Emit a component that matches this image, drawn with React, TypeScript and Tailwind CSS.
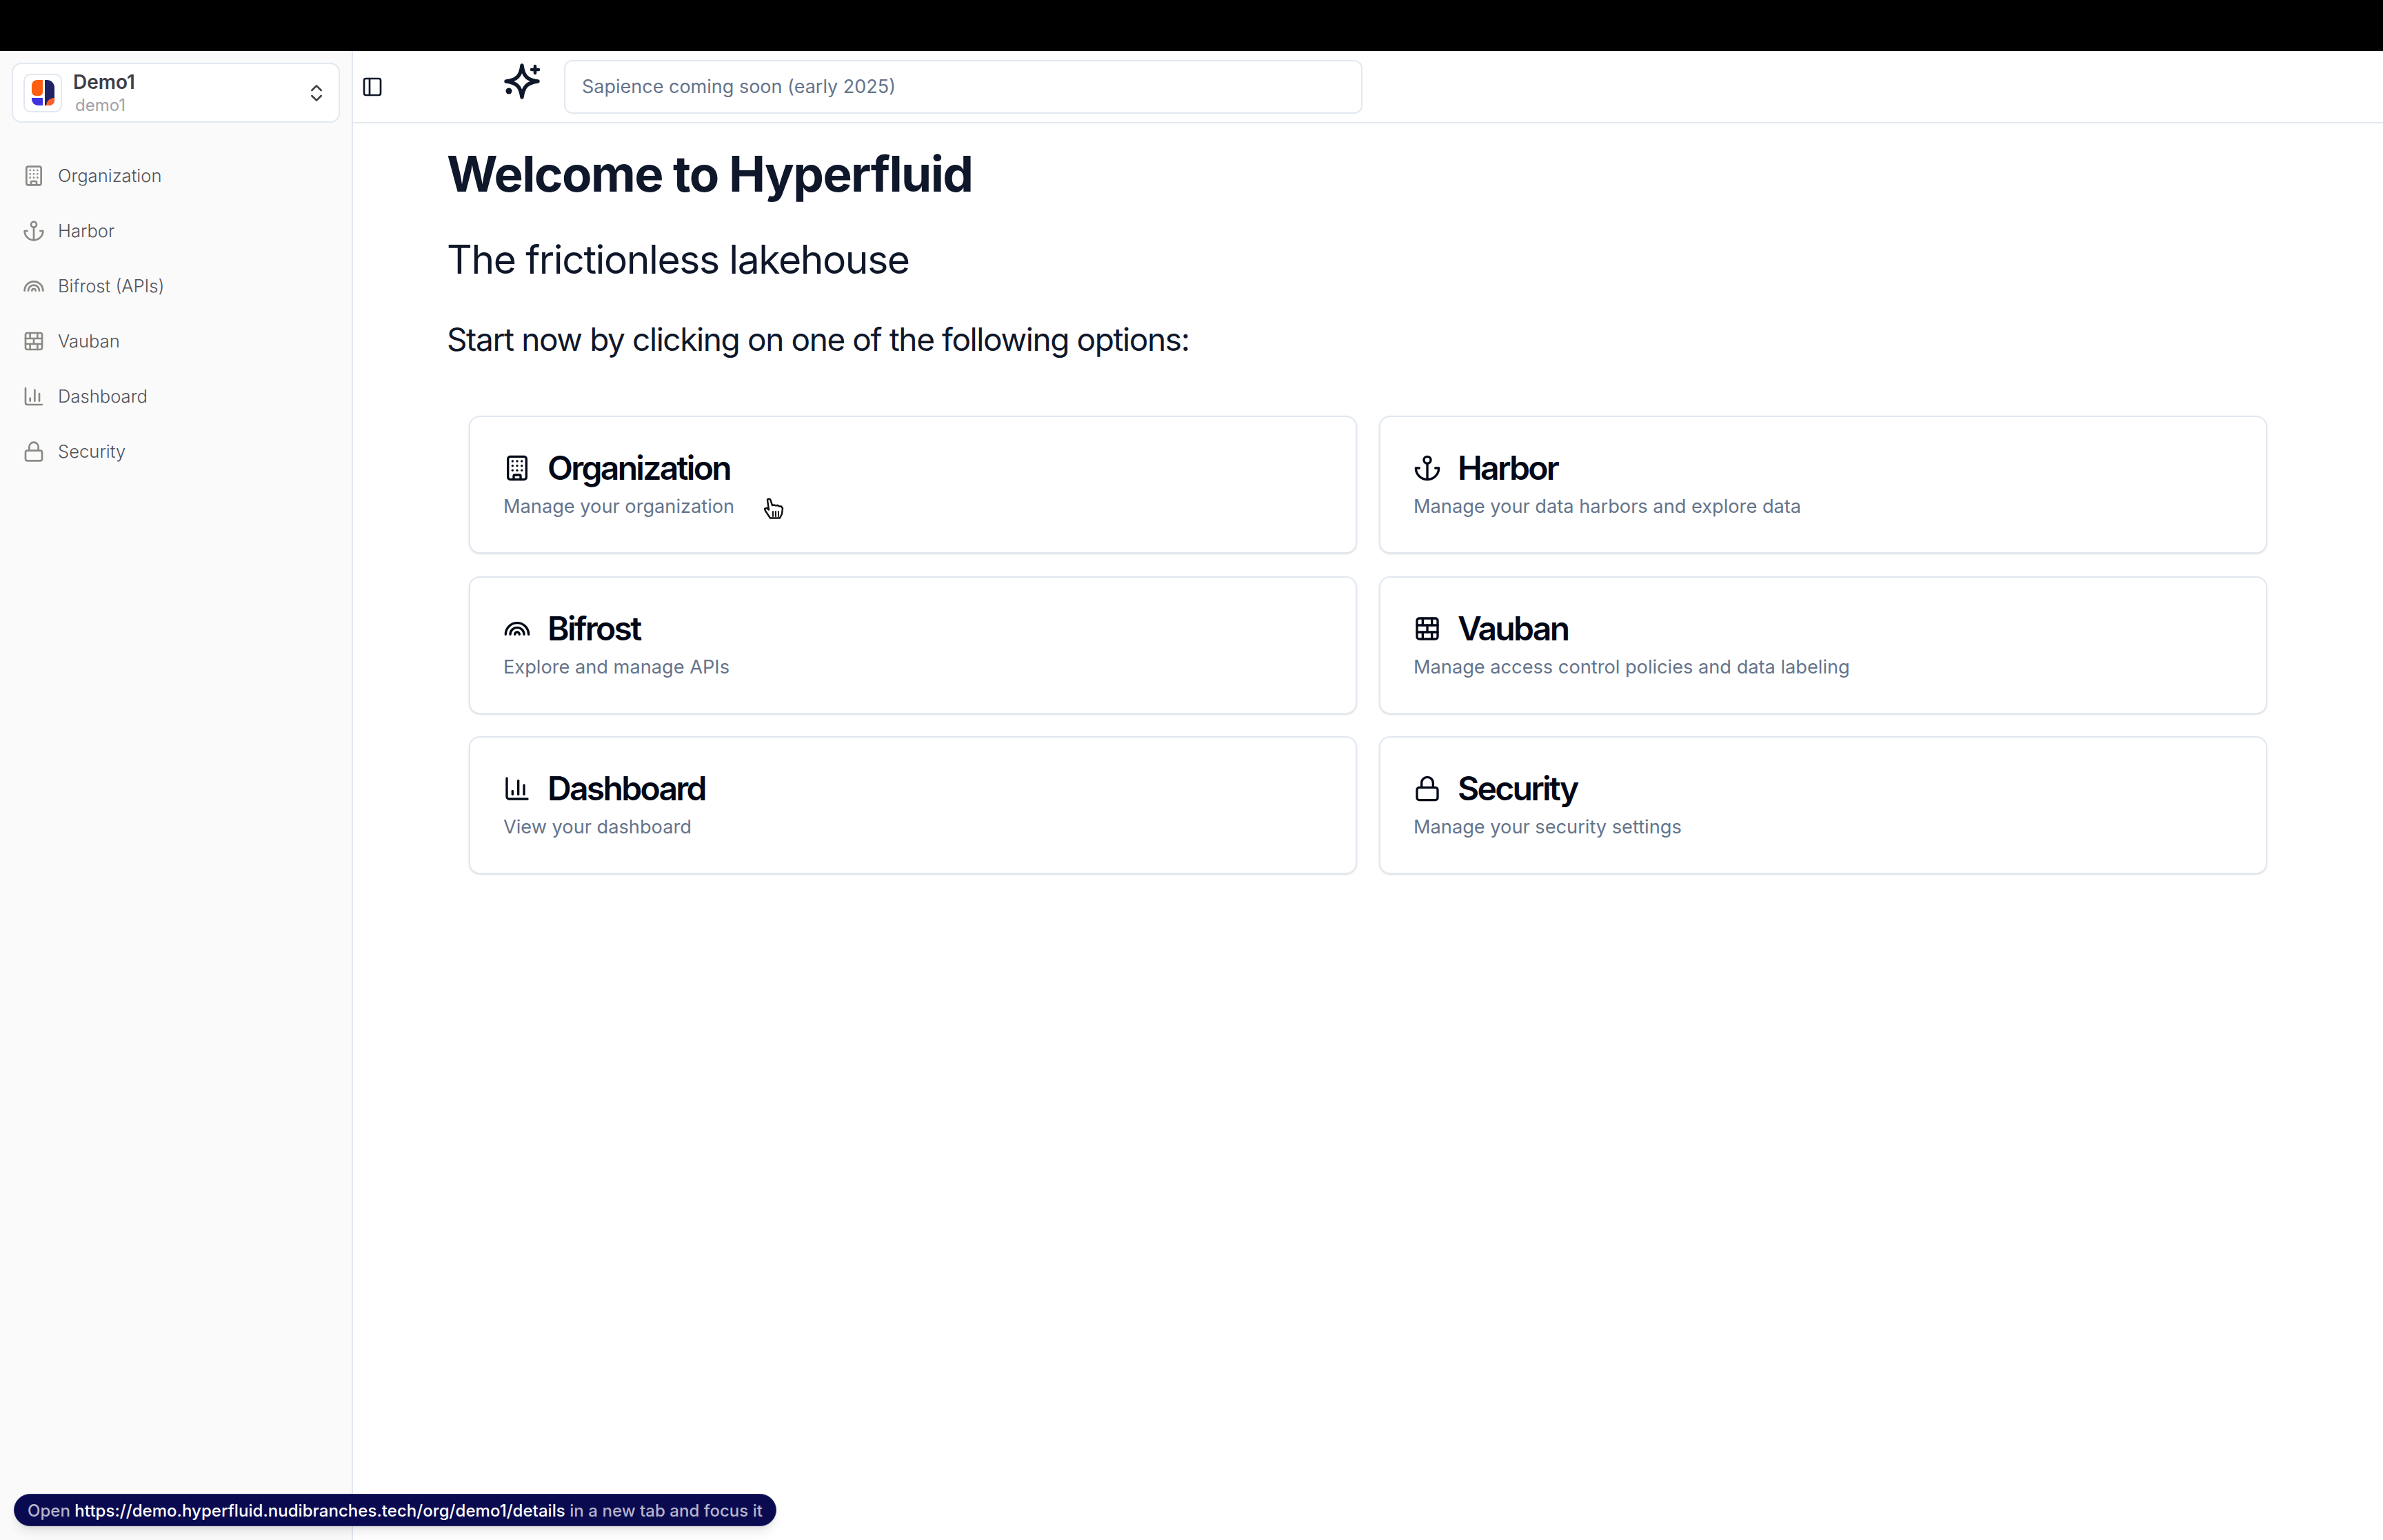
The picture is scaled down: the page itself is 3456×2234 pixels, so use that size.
import { BrickWall, Building, ChartColumn, ChevronsUpDown, Lock, PanelLeft, Rainbow } from 'lucide-react';

// the installed lucide anchor has a crossbar, this one doesn't
const Anchor = ({ className, strokeWidth = 2 }: { className?: string; strokeWidth?: number }) => (
  <svg viewBox="0 0 24 24" fill="none" stroke="currentColor" strokeWidth={strokeWidth} strokeLinecap="round" strokeLinejoin="round" className={className}>
    <path d="M12 22V8" />
    <path d="M5 12H2a10 10 0 0 0 20 0h-3" />
    <circle cx="12" cy="5" r="3" />
  </svg>
);

const Sparkle = () => (
  <svg viewBox="0 0 60 60" fill="none" stroke="currentColor" strokeLinecap="round" strokeLinejoin="round" className="ml-[171px] -mt-[16px] h-[60px] w-[60px] shrink-0 text-[#0f172a]">
    <path d="M30 7C32 22 37 28 53 30 37 32 32 38 30 53 28 38 23 32 7 30 23 28 28 22 30 7Z" strokeWidth={5.5} />
    <path d="M49 8v10M44 13h10" strokeWidth={4.5} />
    <circle cx="11" cy="44" r="4.5" fill="currentColor" stroke="none" />
  </svg>
);

const HandCursor = () => (
  <svg viewBox="0 0 31 33" fill="#fff" stroke="#111" strokeWidth={2.4} strokeLinejoin="round" strokeLinecap="round" className="absolute left-[1107px] top-[722px] h-[33px] w-[31px] blur-[0.6px]">
    <path d="M6 3.5c0-2.4 4-2.4 4.5 0L13 11l3-.5 2 1 3-.5 2 1.5h3l2 3-1 8-3 6H10L3 19l-1-3 3-1 3 2.5z" />
    <path d="M14 20v7M18 20v7M22 20v7" fill="none" strokeWidth={2} />
  </svg>
);

const navItems = [
  { label: 'Organization', icon: Building },
  { label: 'Harbor', icon: Anchor },
  { label: 'Bifrost (APIs)', icon: Rainbow },
  { label: 'Vauban', icon: BrickWall },
  { label: 'Dashboard', icon: ChartColumn },
  { label: 'Security', icon: Lock },
];

const cards = [
  { title: 'Organization', text: 'Manage your organization', icon: Building },
  { title: 'Harbor', text: 'Manage your data harbors and explore data', icon: Anchor },
  { title: 'Bifrost', text: 'Explore and manage APIs', icon: Rainbow },
  { title: 'Vauban', text: 'Manage access control policies and data labeling', icon: BrickWall },
  { title: 'Dashboard', text: 'View your dashboard', icon: ChartColumn },
  { title: 'Security', text: 'Manage your security settings', icon: Lock },
];

const Logo = () => (
  <svg viewBox="0 0 33 37" className="h-[37px] w-[33px]">
    <path d="M8 0h8v18a5 5 0 0 1-5 5H6a6 6 0 0 1-6-6V8a8 8 0 0 1 8-8z" fill="#ff5f0f" />
    <path d="M0 26h16v11H9a9 9 0 0 1-9-9z" fill="#4033e0" />
    <path d="M19 0h3a11 11 0 0 1 11 11v18a8 8 0 0 1-8 8h-6z" fill="#1f2366" />
    <path d="M21 37c0-6 5-11 12-11v3a8 8 0 0 1-8 8z" fill="#ff5f2a" />
  </svg>
);

export default function App() {
  return (
    <div className="relative flex h-[2234px] w-[3456px] flex-col overflow-hidden bg-white font-['Inter',sans-serif]">
      <div className="h-[74px] shrink-0 bg-black" />
      <div className="flex flex-1">
        {/* Sidebar */}
        <aside className="w-[512px] shrink-0 border-r-2 border-[#e2e8f0] bg-[#fafafa] px-[17px] pt-[17px]">
          <div className="flex h-[87px] w-[476px] items-center rounded-[14px] border-2 border-[#e2e8f0] bg-white pl-[15px] pr-[16px]">
            <div className="flex h-[56px] w-[56px] items-center justify-center rounded-[10px] border-2 border-[#e2e8f0]">
              <Logo />
            </div>
            <div className="ml-[16px] flex flex-1 flex-col">
              <span className="text-[28px] leading-[36px] font-semibold text-[#3f3f46]">Demo1</span>
              <span className="ml-[3px] text-[24px] leading-[32px] text-[#a1a1aa]">demo1</span>
            </div>
            <ChevronsUpDown className="h-[32px] w-[32px] text-[#3f3f46]" strokeWidth={2} />
          </div>
          <nav className="mt-[37px] flex flex-col">
            {navItems.map((item) => (
              <div key={item.label} className="flex h-[80px] items-center gap-[19px] pl-[16px] text-[25.6px] font-light text-[#52525b]">
                <item.icon className="h-[32px] w-[32px] text-[#8a8a85]" strokeWidth={2} />
                <span>{item.label}</span>
              </div>
            ))}
          </nav>
        </aside>

        <main className="flex flex-1 flex-col">
          {/* Top bar */}
          <header className="flex h-[105px] items-center border-b-2 border-[#e2e8f0] pl-[12px]">
            <PanelLeft className="h-[32px] w-[32px] text-[#0f172a]" strokeWidth={2} />
            <Sparkle />
            <div className="ml-[31px] flex h-[78px] w-[1158px] items-center rounded-[12px] border-2 border-[#e2e8f0] px-[24px] pt-[2px] text-[27px] text-[#64748b]">
              Sapience coming soon (early 2025)
            </div>
          </header>

          <div className="pl-[136px] pt-[33px]">
            <h1 className="text-[71px] leading-[80px] font-bold tracking-[-1.6px] text-[#0f172a]">Welcome to Hyperfluid</h1>
            <h2 className="mt-[45px] text-[57px] leading-[80px] tracking-[-1.4px] text-[#0f172a]">The frictionless lakehouse</h2>
            <p className="mt-[43px] text-[46px] leading-[64px] tracking-[-1.4px] text-[#0f172a]">Start now by clicking on one of the following options:</p>

            <div className="ml-[32px] mt-[79px] grid w-[2608px] grid-cols-2 gap-x-[32px] gap-y-[32.5px]">
              {cards.map((card) => (
                <div key={card.title} className="h-[200px] rounded-[16px] border-2 border-[#e2e8f0] bg-white pl-[48px] pt-[42px] shadow-sm">
                  <div className="flex h-[64px] items-center text-[#020817]">
                    <card.icon className="h-[40px] w-[40px] shrink-0" strokeWidth={2} />
                    <h3 className="ml-[24px] text-[48px] leading-[64px] font-semibold tracking-[-2.7px]">{card.title}</h3>
                  </div>
                  <p className="mt-[4px] text-[27.2px] leading-[40px] text-[#64748b]">{card.text}</p>
                </div>
              ))}
            </div>
          </div>
        </main>
      </div>

      <HandCursor />

      {/* link hint */}
      <div className="absolute left-[20px] top-[2167px] flex h-[47px] w-[1106px] items-center justify-center rounded-full border border-[#2a2a6a] bg-[#0a0a50] pt-[2px] text-[24px] font-medium tracking-[0.05px] whitespace-nowrap text-[#b5b5cc] shadow-lg">
        Open&nbsp;<span className="text-white">https://demo.hyperfluid.nudibranches.tech/org/demo1/details</span>&nbsp;in a new tab and focus it
      </div>
    </div>
  );
}
